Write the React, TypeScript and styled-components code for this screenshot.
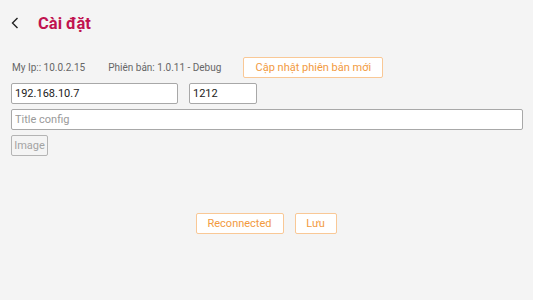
import React from "react";
import styled, { createGlobalStyle } from "styled-components";

const GlobalStyle = createGlobalStyle`
  html, body {
    margin: 0;
    padding: 0;
    background: #f4f4f4;
    font-family: Roboto, "Noto Sans", sans-serif;
  }
`;

const Page = styled.div`
  width: 533px;
  height: 300px;
  background: #f4f4f4;
  display: flex;
  flex-direction: column;
`;

const Header = styled.div`
  height: 45px;
  display: flex;
  align-items: center;
  padding-left: 9px;
`;

const BackButton = styled.button`
  width: 12px;
  height: 16px;
  padding: 0;
  border: 0;
  background: transparent;
  display: flex;
  align-items: center;
  justify-content: center;
  margin-right: 17px;
`;

const Title = styled.h1`
  margin: 0 0 -1px 0;
  font-size: 16.5px;
  font-weight: 700;
  color: #c0134f;
`;

const Content = styled.div`
  padding: 12px 11px 0 11px;
  display: flex;
  flex-direction: column;
  align-items: flex-start;
`;

const InfoRow = styled.div`
  display: flex;
  align-items: center;
  height: 21px;
`;

const InfoText = styled.span<{ $gap: number }>`
  font-size: 10px;
  color: #666;
  margin-left: 1px;
  margin-right: ${(p) => p.$gap}px;
`;

const OutlineButton = styled.button<{ $w: number }>`
  appearance: none;
  width: ${(p) => p.$w}px;
  height: 21px;
  padding: 0;
  box-sizing: border-box;
  border: 1px solid #f9c896;
  border-radius: 2px;
  background: #fff;
  color: #f29a3e;
  font-family: Roboto, "Noto Sans", sans-serif;
  font-size: 11px;
`;

const FieldRow = styled.div`
  display: flex;
  gap: 11px;
  margin-top: 5px;
`;

const Field = styled.input<{ $w?: number }>`
  display: block;
  width: ${(p) => (p.$w ? `${p.$w}px` : "100%")};
  height: 21px;
  box-sizing: border-box;
  border: 1px solid #a8a8a8;
  border-radius: 2px;
  background: #fff;
  padding: 0 3px;
  font-family: Roboto, "Noto Sans", sans-serif;
  font-size: 11px;
  color: #222;
  outline: none;
  &::placeholder {
    color: #9a9a9a;
  }
`;

const TitleRow = styled.div`
  display: flex;
  margin-top: 5px;
  width: 512px;
`;

const ImageButton = styled.button`
  appearance: none;
  display: block;
  margin-top: 5px;
  width: 37px;
  height: 21px;
  padding: 0;
  box-sizing: border-box;
  border: 1px solid #b4b4b4;
  border-radius: 2px;
  background: transparent;
  color: #a3a3a3;
  font-family: Roboto, "Noto Sans", sans-serif;
  font-size: 11px;
`;

const Footer = styled.div`
  align-self: stretch;
  display: flex;
  justify-content: center;
  gap: 11px;
  margin-top: 57px;
  padding-right: 1px;
`;

export default function App() {
  return (
    <>
      <GlobalStyle />
      <Page>
        <Header>
          <BackButton aria-label="back">
            <svg width="8" height="12" viewBox="0 0 8 12">
              <path d="M6.5 1 L1.5 6 L6.5 11" fill="none" stroke="#222" strokeWidth="1.4" />
            </svg>
          </BackButton>
          <Title>Cài đặt</Title>
        </Header>
        <Content>
          <InfoRow>
            <InfoText $gap={22}>My Ip:: 10.0.2.15</InfoText>
            <InfoText $gap={22}>Phiên bản: 1.0.11 - Debug</InfoText>
            <OutlineButton $w={140}>Cập nhật phiên bản mới</OutlineButton>
          </InfoRow>
          <FieldRow>
            <Field $w={167} defaultValue="192.168.10.7" />
            <Field $w={68} defaultValue="1212" />
          </FieldRow>
          <TitleRow>
            <Field placeholder="Title config" />
          </TitleRow>
          <ImageButton>Image</ImageButton>
          <Footer>
            <OutlineButton $w={88}>Reconnected</OutlineButton>
            <OutlineButton $w={42}>Lưu</OutlineButton>
          </Footer>
        </Content>
      </Page>
    </>
  );
}
